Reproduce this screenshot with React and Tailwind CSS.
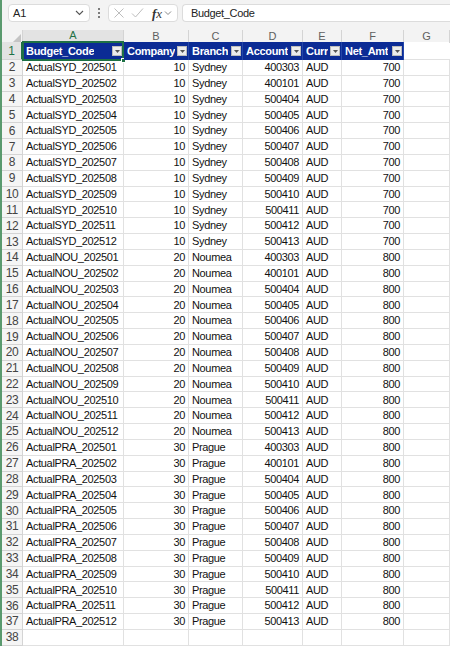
import React from "react";

const groups = [
  { p: "SYD", c: 10, b: "Sydney", a: 700 },
  { p: "NOU", c: 20, b: "Noumea", a: 800 },
  { p: "PRA", c: 30, b: "Prague", a: 800 },
];
const accounts = ["400303", "400101", "500404", "500405", "500406", "500407", "500408", "500409", "500410", "500411", "500412", "500413"];
const rows = [];
groups.forEach((g) => {
  accounts.forEach((acc, i) => {
    const mm = String(i + 1).padStart(2, "0");
    rows.push({ code: `Actual${g.p}_2025${mm}`, comp: g.c, br: g.b, acc, cur: "AUD", amt: g.a });
  });
});

const font = { fontFamily: '"Liberation Sans", Arial, sans-serif' };

function Drop() {
  return (
    <span className="ml-auto flex h-[10px] w-[10px] shrink-0 items-center justify-center border border-[#bcbcbc] bg-[#ececec]">
      <svg width="5" height="3" viewBox="0 0 5 3">
        <path d="M0 0 L5 0 L2.5 3Z" fill="#555" />
      </svg>
    </span>
  );
}

function HeadCell({ label, first }) {
  return (
    <div className="relative flex h-full items-center border-r border-[#2446a8] bg-[#0b2b95] pl-[3px] pr-[1px] text-[11px] font-bold tracking-[-0.3px] text-white">
      <span className="truncate">{label}</span>
      <Drop />
      {first && (
        <>
          <div className="pointer-events-none absolute inset-[-1px] border-2 border-[#1e7145]" />
          <div className="pointer-events-none absolute bottom-[-3px] right-[-3px] h-[5px] w-[5px] border border-white bg-[#1e7145]" />
        </>
      )}
    </div>
  );
}

const cell = "flex h-full items-center border-r border-b border-[#e1e1e1] px-[3px] text-[11px] tracking-[-0.35px] text-[#111] whitespace-nowrap overflow-hidden";
const rowHdr = "flex h-full items-center justify-center border-r border-b border-[#d4d4d4] bg-[#f5f5f5] text-[12px] tracking-[-0.3px] text-[#444]";

export default function App() {
  const letters = ["A", "B", "C", "D", "E", "F", "G"];
  return (
    <div className="h-[646px] w-[450px] overflow-hidden border-l-2 border-[#5a9a6e] bg-white" style={font}>
      {/* Formula bar */}
      <div className="flex h-[30px] items-start gap-0 bg-[#f3f3f3] pt-[4px]">
        <div className="ml-[6px] flex h-[18px] w-[82px] items-center justify-between rounded-[4px] border border-[#dcdcdc] bg-white pl-[4px] pr-[5px]">
          <span className="text-[11px] text-[#222]">A1</span>
          <svg width="9" height="6" viewBox="0 0 9 6">
            <path d="M1 1 L4.5 4.5 L8 1" fill="none" stroke="#555" strokeWidth="1.1" />
          </svg>
        </div>
        <div className="flex h-[18px] w-[18px] flex-col items-center justify-center gap-[2px]">
          <span className="h-[2px] w-[2px] rounded-full bg-[#555]" />
          <span className="h-[2px] w-[2px] rounded-full bg-[#555]" />
          <span className="h-[2px] w-[2px] rounded-full bg-[#555]" />
        </div>
        <div className="flex h-[18px] w-[70px] items-center rounded-[4px] border border-[#dcdcdc] bg-white pl-[4px]">
          <svg width="12" height="12" viewBox="0 0 12 12">
            <path d="M1.5 1.5 L10.5 10.5 M10.5 1.5 L1.5 10.5" stroke="#bdbdbd" strokeWidth="1" />
          </svg>
          <svg className="ml-[6px]" width="13" height="12" viewBox="0 0 13 12">
            <path d="M1 6.5 L4.5 10 L12 1.5" fill="none" stroke="#bdbdbd" strokeWidth="1" />
          </svg>
          <span className="ml-[8px] text-[13px] italic leading-none text-[#333]" style={{ fontFamily: '"Liberation Serif", serif' }}>
            <b className="font-bold">f</b>x
          </span>
          <svg className="ml-[2px]" width="8" height="6" viewBox="0 0 8 6">
            <path d="M1 1.5 L4 4.5 L7 1.5" fill="none" stroke="#888" strokeWidth="1" />
          </svg>
        </div>
        <div className="ml-[4px] flex h-[18px] flex-1 items-center rounded-l-[4px] border border-r-0 border-[#dcdcdc] bg-white pl-[8px]">
          <span className="text-[11px] tracking-[-0.35px] text-[#222]">Budget_Code</span>
        </div>
      </div>

      {/* Column headers */}
      <div className="grid h-[12px] grid-cols-[21px_101px_65px_54px_60px_39px_62px_1fr] bg-[#f3f3f3] text-[11px] text-[#5f5f5f]">
        <div className="relative border-r border-[#d4d4d4]">
          <svg className="absolute bottom-[1px] right-[1px]" width="8" height="8" viewBox="0 0 8 8">
            <path d="M8 0 L8 8 L0 8Z" fill="#c4c4c4" />
          </svg>
        </div>
        {letters.map((l, i) => (
          <div
            key={l}
            className={
              i === 0
                ? "flex items-center justify-center border-r border-b-2 border-r-[#d4d4d4] border-b-[#1e7145] bg-[#e3e3e3] leading-none text-[#1e7145]"
                : "flex items-center justify-center border-r border-[#d4d4d4] leading-none"
            }
          >
            {l}
          </div>
        ))}
      </div>

      {/* Sheet */}
      <div className="grid grid-cols-[21px_101px_65px_54px_60px_39px_62px_1fr] grid-rows-[18px_repeat(37,15.84px)]">
        <div className="flex h-full items-center justify-center border-r-2 border-b border-r-[#1e7145] border-b-[#d4d4d4] bg-[#e3e3e3] text-[12px] text-[#1e7145]">1</div>
        <HeadCell label="Budget_Code" first />
        <HeadCell label="Company" />
        <HeadCell label="Branch" />
        <HeadCell label="Account" />
        <HeadCell label="Curr" />
        <HeadCell label="Net_Amt" />
        <div className="h-full border-b border-[#e1e1e1]" />

        {rows.map((r, i) => (
          <React.Fragment key={i}>
            <div className={rowHdr}>{i + 2}</div>
            <div className={cell}>{r.code}</div>
            <div className={cell + " justify-end"}>{r.comp}</div>
            <div className={cell}>{r.br}</div>
            <div className={cell + " justify-end"}>{r.acc}</div>
            <div className={cell}>{r.cur}</div>
            <div className={cell + " justify-end"}>{r.amt}</div>
            <div className={cell} />
          </React.Fragment>
        ))}
        <div className={rowHdr}>38</div>
        <div className={cell} />
        <div className={cell} />
        <div className={cell} />
        <div className={cell} />
        <div className={cell} />
        <div className={cell} />
        <div className={cell} />
      </div>
    </div>
  );
}
